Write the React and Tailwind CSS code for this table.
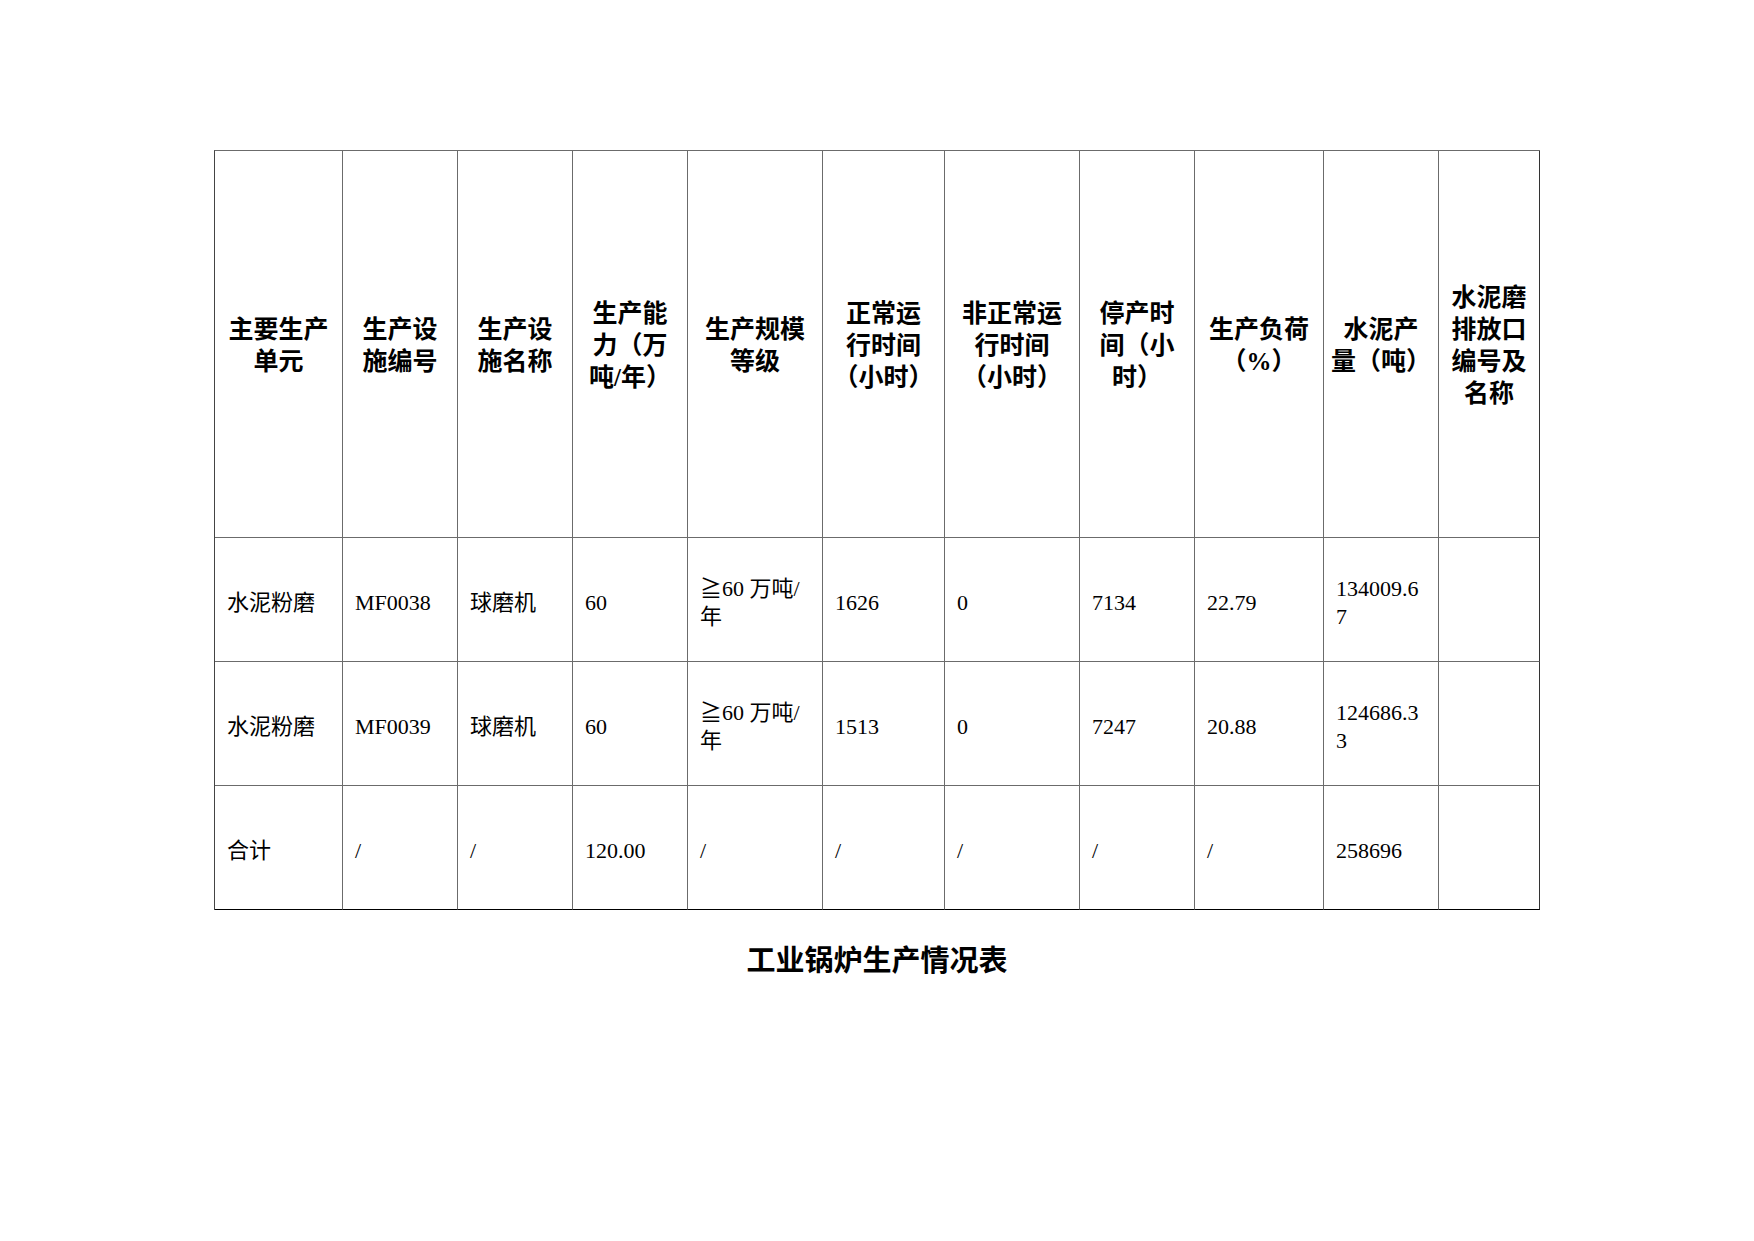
const headers = [
  ["主要生产", "单元"],
  ["生产设", "施编号"],
  ["生产设", "施名称"],
  ["生产能", "力（万", "吨/年）"],
  ["生产规模", "等级"],
  ["正常运", "行时间", "（小时）"],
  ["非正常运", "行时间", "（小时）"],
  ["停产时", "间（小", "时）"],
  ["生产负荷", "（%）"],
  ["水泥产", "量（吨）"],
  ["水泥磨", "排放口", "编号及", "名称"],
];

const rows = [
  [["水泥粉磨"], ["MF0038"], ["球磨机"], ["60"], ["≧60 万吨/", "年"], ["1626"], ["0"], ["7134"], ["22.79"], ["134009.6", "7"], []],
  [["水泥粉磨"], ["MF0039"], ["球磨机"], ["60"], ["≧60 万吨/", "年"], ["1513"], ["0"], ["7247"], ["20.88"], ["124686.3", "3"], []],
  [["合计"], ["/"], ["/"], ["120.00"], ["/"], ["/"], ["/"], ["/"], ["/"], ["258696"], []],
];

function HeaderCell({ lines, last }) {
  return (
    <div
      className={
        "flex flex-col items-center justify-center border-b border-r border-[#6b6b6b] pt-1 text-[25px] leading-[32px] font-bold " +
        (last ? "border-r-[#333]" : "")
      }
    >
      {lines.map((l, i) => (
        <div
          key={i}
          className={"whitespace-nowrap " + (l === "（小时）" ? "[font-feature-settings:'halt']" : "")}
        >
          {l}
        </div>
      ))}
    </div>
  );
}

function BodyCell({ lines, last, bottom }) {
  return (
    <div
      className={
        "flex flex-col justify-center border-b border-r border-[#6b6b6b] pl-3 pt-[6px] text-[22px] leading-[28px] " +
        (last ? "border-r-[#333] " : "") +
        (bottom ? "border-b-black" : "")
      }
    >
      {lines.map((l, i) => (
        <div key={i} className="whitespace-nowrap">
          {l}
        </div>
      ))}
    </div>
  );
}

export default function App() {
  return (
    <div className="min-h-[1241px] w-[1754px] bg-white pt-[150px] text-black font-['Liberation_Serif','Noto_Sans_CJK_SC',serif]">
      <div className="mx-auto grid w-[1326px] grid-cols-[128px_115px_115px_115px_135px_122px_135px_115px_129px_115px_101px] grid-rows-[387px_124px_124px_124px] border-l border-t border-l-[#444] border-t-[#6b6b6b]">
        {headers.map((h, i) => (
          <HeaderCell key={i} lines={h} last={i === headers.length - 1} />
        ))}
        {rows.map((r, ri) =>
          r.map((c, ci) => (
            <BodyCell
              key={ri + "-" + ci}
              lines={c}
              last={ci === r.length - 1}
              bottom={ri === rows.length - 1}
            />
          ))
        )}
      </div>
      <h2 className="mt-[30px] text-center text-[29px] leading-[36px] font-bold font-['Noto_Sans_CJK_SC',sans-serif]">
        工业锅炉生产情况表
      </h2>
    </div>
  );
}
